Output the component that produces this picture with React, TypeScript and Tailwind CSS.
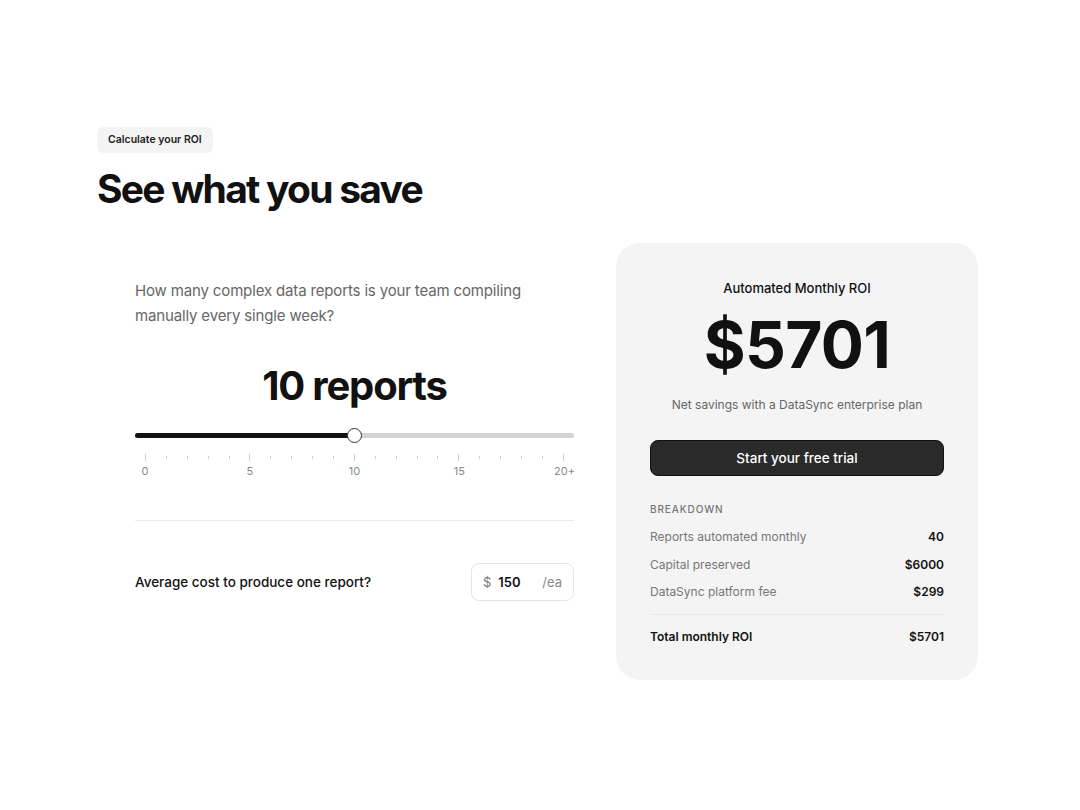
import React from "react";

const font = { fontFamily: "Inter, 'Noto Sans', sans-serif" };

const ticks = Array.from({ length: 21 }, (_, i) => i);

function Slider() {
  const pct = 50;
  return (
    <div>
      <div className="relative h-[14px] flex items-center">
        <div className="h-[5px] w-full rounded-full bg-[#d4d4d4]" />
        <div
          className="absolute left-0 h-[5px] rounded-full bg-[#111]"
          style={{ width: `${pct}%` }}
        />
        <div
          className="absolute w-[15px] h-[15px] -ml-[7.5px] rounded-full bg-white border border-[#333]"
          style={{ left: `${pct}%` }}
        />
      </div>
      <div className="mt-[11px] px-[10px] flex justify-between">
        {ticks.map((t) => (
          <div
            key={t}
            className={
              t % 5 === 0
                ? "w-px h-[7px] bg-[#cfcfcf]"
                : "w-px h-[3px] mt-[2px] bg-[#cfcfcf]"
            }
          />
        ))}
      </div>
      <div className="mt-[2px] flex justify-between text-[11px] text-[#888]">
        <span className="w-[20px] text-center">0</span>
        <span className="w-[20px] text-center">5</span>
        <span className="w-[20px] text-center">10</span>
        <span className="w-[20px] text-center">15</span>
        <span className="w-[20px] text-right">20+</span>
      </div>
    </div>
  );
}

function Row({ label, value }: { label: string; value: string }) {
  return (
    <div className="flex justify-between items-center h-[27.5px] text-[12px]">
      <span className="text-[#777]">{label}</span>
      <span className="font-semibold text-[#111]">{value}</span>
    </div>
  );
}

export default function App() {
  return (
    <div className="w-[1080px] h-[810px] bg-white text-[#111]" style={font}>
      <div className="pt-[125px] pl-[97px]">
        <span className="inline-block px-[11px] py-[5px] rounded-md bg-[#f3f3f3] text-[10.5px] font-semibold text-[#222]">
          Calculate your ROI
        </span>
        <h1 className="mt-[12px] text-[39px] leading-[48px] font-bold tracking-[-0.045em]">
          See what you save
        </h1>
      </div>

      <div className="mt-[30px] flex">
        {/* calculator inputs */}
        <div className="ml-[135px] w-[439px] pt-[35px]">
          <p className="text-[15px] leading-[25px] text-[#666] tracking-[-0.01em]">
            How many complex data reports is your team compiling
            <br />
            manually every single week?
          </p>
          <div className="mt-[34px] text-center text-[40px] leading-[48px] font-bold tracking-[-0.03em]">
            10 reports
          </div>
          <div className="mt-[19px]">
            <Slider />
          </div>
          <div className="mt-[41px] border-t border-[#ececec]" />
          <div className="mt-[42px] flex items-center justify-between">
            <span className="text-[13.5px] font-medium text-[#111]">
              Average cost to produce one report?
            </span>
            <div className="w-[103px] h-[38px] rounded-lg border border-[#e5e5e5] flex items-center px-[11px] text-[13px]">
              <span className="text-[#777]">$</span>
              <span className="ml-[7px] font-semibold text-[#111]">150</span>
              <span className="ml-auto text-[#888]">/ea</span>
            </div>
          </div>
        </div>

        {/* results card */}
        <div className="ml-[42px] w-[362px] h-[437px] rounded-[24px] bg-[#f4f4f4] px-[34px] pt-[36px]">
          <div className="text-center text-[13px] font-medium text-[#111]">
            Automated Monthly ROI
          </div>
          <div className="mt-[9px] text-center text-[64px] leading-[76px] font-bold tracking-[-0.01em]">
            $5701
          </div>
          <div className="mt-[13px] text-center text-[12px] text-[#666]">
            Net savings with a DataSync enterprise plan
          </div>
          <button className="mt-[26px] w-full h-[36px] rounded-lg bg-[#2a2a2a] border border-[#111] text-white text-[13.5px] font-medium">
            Start your free trial
          </button>
          <div className="mt-[26px] text-[10px] tracking-[0.09em] text-[#777] font-medium">
            BREAKDOWN
          </div>
          <div className="mt-[6px]">
            <Row label="Reports automated monthly" value="40" />
            <Row label="Capital preserved" value="$6000" />
            <Row label="DataSync platform fee" value="$299" />
          </div>
          <div className="mt-[8px] border-t border-[#e8e8e8]" />
          <div className="mt-[13px] flex justify-between text-[12px] font-semibold">
            <span>Total monthly ROI</span>
            <span>$5701</span>
          </div>
        </div>
      </div>
    </div>
  );
}
